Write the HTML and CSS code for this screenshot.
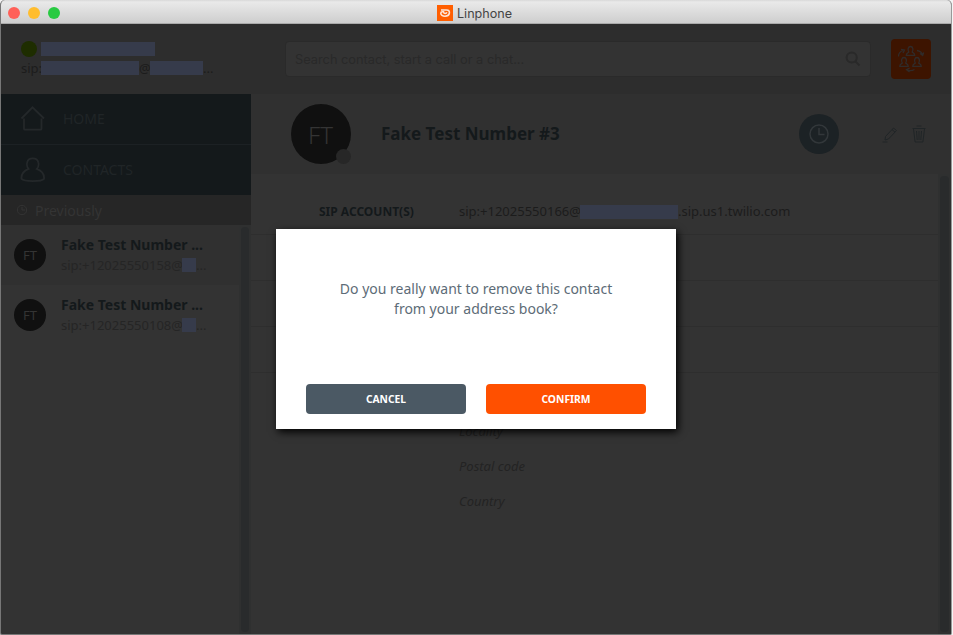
FILE: index.html
```html
<!DOCTYPE html>
<html lang="en">
<head>
<meta charset="utf-8">
<title>Linphone</title>
<link rel="stylesheet" href="styles.css">
</head>
<body>
<div class="window">
  <div class="titlebar">
    <div class="lights"><i class="light red"></i><i class="light yellow"></i><i class="light green"></i></div>
    <svg class="app-logo" viewBox="0 0 16 16"><rect width="16" height="16" fill="#ff5e00"/><path d="M4 5H9.500C12 5 12.800 6.500 12.300 8.500C11.800 10.600 9.800 11.200 8 11.200C5.500 11.200 3.800 10 3.800 8.200C3.800 7.200 4.500 6.800 5.500 6.800H6.500C6.600 9 9.300 9 9.800 7.300" fill="none" stroke="#ffe7d9" stroke-width="1.600"/></svg>
    <span>Linphone</span>
  </div>
  <header class="toolbar">
    <div class="account">
      <div class="account-row name"><i class="presence"></i><i class="redacted w114"></i></div>
      <div class="account-row sip"><span class="sip-label">sip:</span><i class="redacted w98"></i><span class="at">@</span><i class="redacted w53"></i><span>...</span></div>
    </div>
    <div class="search"><span>Search contact, start a call or a chat...</span>
      <svg viewBox="0 0 16 16"><circle cx="6.700" cy="6.500" r="5.100"/><path d="M10.500 10.500L14.500 14.500"/></svg>
    </div>
    <div class="conference">
      <svg viewBox="0 0 40 40"><path id="bell" d="M15.300 16.300c0-2.200 1.700-2.300 2.500-3.300c-1.400-2-.8-5.500 1.700-5.500s3.100 3.500 1.700 5.500c.8 1 2.500 1.100 2.500 3.300z"/><use href="#bell" x="-6.500" y="11"/><use href="#bell" x="6.500" y="11"/><path d="M7.500 17.500c0-3 1.500-5 4.500-6M10 10.300l3.500.7-1.500 3M26 11.500c3 .5 5 2 5.500 4.500M29 14.500l2.700 2 1-3M23.500 30.500c-2 1.200-5 1.600-7.500.3M18.500 33l-3-2.300 3.200-1.700"/></svg>
    </div>
  </header>
  <div class="body">
    <aside class="sidebar">
      <nav>
        <div class="nav-item"><svg viewBox="0 0 26 26"><path d="M1.500 12.500L12.500 1.300L24 12.500M4 12.500v10.200q0 1 1 1h15.500q1 0 1-1V12.500"/></svg><span>HOME</span></div>
        <div class="nav-item"><svg viewBox="0 0 26 26"><path d="M8.500 11.900C6.800 10 6.800 6.500 7.200 5.200C8.600.2 16.900.2 18.300 5.200C18.700 6.500 18.700 10 16.800 11.900C21.500 13.800 24.500 17.200 24 21.900C21.600 24.800 4 24.800 1.500 21.900C1 17.200 4 13.800 8.500 11.900z"/></svg><span>CONTACTS</span></div>
      </nav>
      <div class="timeline-head"><svg viewBox="0 0 12 12"><circle cx="6" cy="6" r="4.700"/><path d="M6 3v3h3"/></svg><span>Previously</span></div>
      <div class="timeline">
        <div class="entries">
          <div class="entry selected"><div class="avatar">FT</div><div class="entry-text"><b>Fake Test Number ...</b><div class="entry-sip"><span class="number">sip:+12025550158@</span><i class="redacted w14"></i><span>...</span></div></div></div>
          <div class="entry"><div class="avatar">FT</div><div class="entry-text"><b>Fake Test Number ...</b><div class="entry-sip"><span class="number">sip:+12025550108@</span><i class="redacted w14"></i><span>...</span></div></div></div>
        </div>
        <div class="scroll"></div>
      </div>
    </aside>
    <main>
      <div class="contact-head">
        <div class="avatar big">FT<i class="status"></i></div>
        <h1>Fake Test Number #3</h1>
        <div class="history"><svg viewBox="0 0 20 20"><circle cx="10" cy="10" r="9"/><path d="M10 4v6.500h5.500"/></svg></div>
        <svg class="edit" viewBox="0 0 16 17"><path d="M3.500 10.500L11.500 2L14.500 4.500L6.500 13L3 14zM10 3.600l3 2.500M.5 16h5"/></svg>
        <svg class="trash" viewBox="0 0 16 18"><path d="M5.500 1h5M1.500 3.500h13M2.500 4l1.600 13h7.800l1.600-13M5.500 6l.7 9M8 6v9M10.500 6l-.7 9"/></svg>
      </div>
      <div class="details">
        <div class="fields">
          <div class="field first"><label>SIP ACCOUNT(S)</label><div class="value"><span class="number">sip:+12025550166@</span><i class="redacted w98"></i><span>.sip.us1.twilio.com</span></div></div>
          <div class="field"></div><div class="field"></div><div class="field"></div>
          <div class="address"><div>Locality</div><div>Postal code</div><div>Country</div></div>
        </div>
        <div class="scroll wide"></div>
      </div>
    </main>
  </div>
  <div class="dialog">
    <p>Do you really want to remove this contact<br>from your address book?</p>
    <div class="buttons"><button class="cancel">CANCEL</button><button class="confirm">CONFIRM</button></div>
  </div>
</div>
</body>
</html>
```
FILE: styles.css
```css
* { box-sizing: border-box; }
body { margin: 0; background: #f4f4f4; font-family: "Noto Sans", sans-serif; font-size: 13px; color: #1c1c1c; }
svg { fill: none; stroke: #292929; stroke-width: 1.5; flex: none; }
i { display: block; flex: none; }
.window { position: relative; width: 952px; height: 635px; border: 1px solid #777; border-top: 0; border-right-color: #999; border-radius: 5px 5px 2px 2px; background: #333; overflow: hidden; display: flex; flex-direction: column; }
.titlebar { height: 24px; flex: none; display: flex; align-items: center; padding: 2px 0 0 7px; background: linear-gradient(#d8d8d8, #e9e9e9 2px, #cecece 23px, #aaa 23px); font: 12.6px Inter, sans-serif; color: #444; }
.lights { display: flex; gap: 8px; width: 429px; }
.light { width: 12px; height: 12px; border-radius: 50%; }
.red { background: #ff6058; }
.yellow { background: #ffbd2e; }
.green { background: #28ca41; }
.app-logo { width: 16px; height: 16px; margin-right: 4px; stroke: none; }
.toolbar { height: 70px; flex: none; background: #2d2d2d; display: flex; padding: 15px 19px 0 20px; }
.account { width: 264px; padding-top: 1px; }
.account-row { display: flex; align-items: center; height: 20px; line-height: 20px; }
.name { height: 17px; margin-bottom: 1px; }
.presence { width: 16px; height: 16px; border-radius: 50%; background: #1e2d00; margin-right: 4px; }
.redacted { height: 14px; background: #363b4b; }
.w114 { width: 114px; }
.w98 { width: 98px; }
.w53 { width: 53px; }
.w14 { width: 14px; }
.sip-label { width: 20px; }
.at { width: 11px; }
.search { width: 586px; height: 36px; margin-top: 2px; border: 1px solid #2a2a2a; border-radius: 4px; background: #333; display: flex; justify-content: space-between; align-items: center; padding: 0 9px; font: 12.8px Inter, sans-serif; color: #292929; }
.search svg { width: 16px; height: 16px; stroke-width: 2; }
.conference { width: 40px; height: 40px; margin-left: 20px; border-radius: 4px; background: #3d1400; }
.conference svg { width: 40px; height: 40px; stroke: #302b29; stroke-width: 1.3; }
.body { display: flex; flex: 1; min-height: 0; }
.sidebar { width: 250px; flex: none; display: flex; flex-direction: column; }
.nav-item { height: 50px; background: #14191b; display: flex; align-items: center; padding-left: 19px; gap: 17px; font-size: 14px; line-height: 18px; color: #202527; }
.nav-item span { padding-bottom: 1px; }
.nav-item + .nav-item { height: 51px; border-top: 1px solid #1c2124; }
.nav-item svg { width: 26px; height: 26px; stroke: #24282a; stroke-width: 1.8; }
.timeline-head { height: 30px; background: #262626; color: #343434; display: flex; align-items: center; gap: 7px; padding-left: 15px; font-size: 14px; }
.timeline-head svg { width: 12px; height: 12px; stroke: #343434; stroke-width: 1; }
.timeline, .details { display: flex; flex: 1; min-height: 0; }
.entries, .fields { flex: 1; }
.entry { height: 60px; display: flex; align-items: center; padding-left: 13px; gap: 15px; }
.selected { background: #303030; }
.avatar { width: 32px; height: 32px; border-radius: 50%; background: #101010; color: #343434; display: flex; align-items: center; justify-content: center; font-size: 13px; }
.entry-text b { display: block; font-size: 14px; line-height: 20px; color: #14191b; white-space: nowrap; }
.entry-sip { display: flex; align-items: center; height: 20px; line-height: 19px; color: #252525; }
.scroll { width: 12px; background: #2f3030; padding: 2px; display: flex; }
.scroll::before { content: ""; flex: 1; border-radius: 4px; background: #292b2c; }
.wide { width: 13px; }
main { flex: 1; display: flex; flex-direction: column; min-width: 0; }
.contact-head { height: 80px; flex: none; background: #303030; display: flex; align-items: center; padding-left: 40px; }
.big { position: relative; width: 60px; height: 60px; font-size: 24px; padding: 0 1px 0 0; font-weight: 300; }
.status { position: absolute; right: 0; bottom: 0; width: 15px; height: 15px; border-radius: 50%; background: #272727; }
h1 { margin: 0 0 0 30px; width: 418px; font-size: 17px; line-height: 24px; color: #14191b; }
.history { width: 40px; height: 40px; border-radius: 50%; background: #1c2225; display: flex; align-items: center; justify-content: center; }
.history svg { width: 20px; height: 20px; stroke: #32373a; }
.edit { width: 16px; height: 17px; margin-left: 43px; stroke-width: 1; stroke: #202527; }
.trash { width: 16px; height: 18px; margin-left: 13px; stroke-width: 1; stroke: #202527; }
.field { height: 46px; border-bottom: 1px solid #2e2e2e; }
.first { height: 61px; padding-top: 15px; display: flex; line-height: 45px; }
.first label { width: 208px; padding-left: 68px; font-weight: 700; font-size: 12px; line-height: 46px; color: #14191b; white-space: nowrap; }
.value { display: flex; align-items: center; white-space: nowrap; }
.number { width: 121px; }
.address { padding: 41px 0 0 208px; font-style: italic; line-height: 35px; color: #232323; }
.dialog { position: absolute; left: 275px; top: 229px; width: 400px; height: 200px; background: #fff; box-shadow: 2px 3px 8px #000; padding: 50px 30px 15px; display: flex; flex-direction: column; justify-content: space-between; }
.dialog p { margin: 0; text-align: center; font-size: 14px; line-height: 20px; color: #5d6c77; }
.buttons { display: flex; gap: 20px; }
button { width: 160px; height: 30px; border: 0; border-radius: 4px; color: #fff; font: 700 10.3px "Noto Sans", sans-serif; }
.cancel { background: #4b5964; }
.confirm { background: #ff5000; }
```
